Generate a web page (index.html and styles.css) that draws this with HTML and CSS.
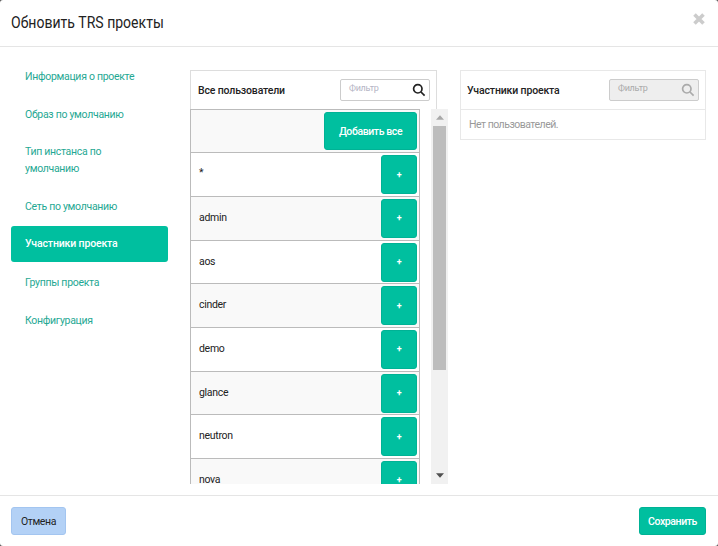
FILE: index.html
```html
<!DOCTYPE html>
<html lang="ru">
<head>
<meta charset="utf-8">
<title>Обновить TRS проекты</title>
<link rel="stylesheet" href="styles.css">
</head>
<body>
<div class="modal">
  <header class="modal-header">
    <h1 class="modal-title">Обновить TRS проекты</h1>
    <svg class="close" viewBox="0 0 14 14" aria-label="Закрыть"><path d="M2.5 2.5l9 9M11.5 2.5l-9 9"/></svg>
  </header>
  <main class="modal-body">
    <nav class="steps">
      <a class="step">Информация о проекте</a>
      <a class="step">Образ по умолчанию</a>
      <a class="step step-wrap">Тип инстанса по умолчанию</a>
      <a class="step">Сеть по умолчанию</a>
      <a class="step active">Участники проекта</a>
      <a class="step">Группы проекта</a>
      <a class="step">Конфигурация</a>
    </nav>
    <section class="all-users">
      <div class="panel-head">
        <span class="panel-title">Все пользователи</span>
        <div class="filter">
          <span class="filter-text">Фильтр</span>
          <svg class="search" viewBox="0 0 14 14"><circle cx="5.8" cy="5.8" r="4.2"/><path d="M9 9l3.6 3.6"/></svg>
        </div>
      </div>
      <div class="list-wrap">
        <div class="list">
          <div class="row row-all"><button class="btn btn-all">Добавить все</button></div>
          <div class="row"><span class="name name-star">*</span><button class="btn btn-add">+</button></div>
          <div class="row"><span class="name">admin</span><button class="btn btn-add">+</button></div>
          <div class="row"><span class="name">aos</span><button class="btn btn-add">+</button></div>
          <div class="row"><span class="name">cinder</span><button class="btn btn-add">+</button></div>
          <div class="row"><span class="name">demo</span><button class="btn btn-add">+</button></div>
          <div class="row"><span class="name">glance</span><button class="btn btn-add">+</button></div>
          <div class="row"><span class="name">neutron</span><button class="btn btn-add">+</button></div>
          <div class="row"><span class="name">nova</span><button class="btn btn-add">+</button></div>
        </div>
        <div class="scrollbar">
          <svg class="arrow" viewBox="0 0 9 5"><path d="M4.5 0L9 5H0z"/></svg>
          <div class="thumb"></div>
          <svg class="arrow arrow-down" viewBox="0 0 9 5"><path d="M0 0h9L4.5 5z"/></svg>
        </div>
      </div>
    </section>
    <section class="members">
      <div class="panel-head panel-head-light">
        <span class="panel-title">Участники проекта</span>
        <div class="filter filter-off">
          <span class="filter-text">Фильтр</span>
          <svg class="search" viewBox="0 0 14 14"><circle cx="5.8" cy="5.8" r="4.2"/><path d="M9 9l3.6 3.6"/></svg>
        </div>
      </div>
      <div class="empty">Нет пользователей.</div>
    </section>
  </main>
  <footer class="modal-footer">
    <button class="btn btn-cancel">Отмена</button>
    <button class="btn btn-save">Сохранить</button>
  </footer>
</div>
</body>
</html>
```
FILE: styles.css
```css
* { box-sizing: border-box; }
html, body { margin: 0; height: 100%; }
body {
  background: #555;
  font-family: Roboto, "Noto Sans", "Liberation Sans", sans-serif;
  font-size: 10.5px;
  letter-spacing: -0.3px;
  color: #222;
  overflow: hidden;
}
.modal {
  height: 546px;
  background: #fff;
  border-radius: 3px;
  display: flex;
  flex-direction: column;
}
.modal-header {
  height: 47px;
  flex: none;
  border-bottom: 1px solid #e5e5e5;
  display: flex;
  align-items: center;
  justify-content: space-between;
  padding: 0 12px 2px 11px;
}
.modal-title {
  margin: 0;
  font-size: 16.5px;
  font-weight: 400;
  letter-spacing: 0;
  color: #222;
  transform: scaleX(0.85);
  transform-origin: left center;
}
.close { width: 14px; height: 14px; fill: none; stroke: #ccc; stroke-width: 3.6; margin-top: -7px; }
.modal-body { flex: 1; min-height: 0; display: flex; padding: 11px 12px 11px 11px; align-items: flex-start; }
.steps { width: 157px; flex: none; display: flex; flex-direction: column; gap: 2px; }
.step {
  display: block;
  padding: 10px 14px 9px;
  line-height: 17px;
  color: #1fa893;
  border-radius: 3px;
}
.step-wrap { padding: 9px 14px; }
.step.active { background: #00bf9f; color: #fff; font-weight: 500; letter-spacing: -0.15px; padding: 9px 14px 10px; }
.all-users { margin: 12px 0 0 22px; width: 258px; flex: none; display: flex; flex-direction: column; height: 414px; }
.panel-head {
  height: 39px;
  width: 247px;
  flex: none;
  border: 1px solid #ddd;
  border-bottom: 0;
  display: flex;
  align-items: center;
  justify-content: space-between;
  padding: 0 6px 0 7px;
}
.panel-title { font-weight: 500; color: #222; letter-spacing: -0.15px; }
.filter {
  width: 90px;
  height: 22px;
  border: 1px solid #ccc;
  border-radius: 2px;
  background: #fff;
  display: flex;
  align-items: center;
  justify-content: space-between;
  padding: 0 3px 0 8px;
}
.filter-text { font-size: 9px; color: #b5b5c5; margin-top: -5px; }
.search { width: 14px; height: 14px; fill: none; stroke: #222; stroke-width: 1.7; }
.filter-off { background: #eee; }
.filter-off .filter-text { color: #aaa; }
.filter-off .search { stroke: #aaa; }
.list-wrap { flex: 1; min-height: 0; display: flex; justify-content: space-between; }
.list { width: 230px; overflow: hidden; border-left: 1px solid #bbb; border-right: 1px solid #bbb; border-top: 1px solid #bbb; }
.row {
  height: 43.67px;
  border-bottom: 1px solid #bbb;
  display: flex;
  align-items: flex-start;
  justify-content: space-between;
  padding: 2px 2px 0 8px;
}
.row:nth-child(odd) { background: #f9f9f9; }
.row-all { height: 43.3px; justify-content: flex-end; }
.name { line-height: 38px; color: #222; }
.name-star { line-height: 36px; }
.btn {
  border: 1px solid #00b295;
  border-radius: 3px;
  background: #00bf9f;
  color: #fff;
  font: inherit;
  font-weight: 500;
  letter-spacing: -0.4px;
  padding: 0;
}
.btn-all { width: 93px; height: 38px; }
.btn-add { width: 36px; height: 39px; font-size: 9px; font-weight: 700; }
.scrollbar {
  width: 17px;
  background: #f1f1f1;
  display: flex;
  flex-direction: column;
  align-items: center;
  padding-top: 6px;
}
.arrow { width: 8px; height: 5px; fill: #a8a8a8; flex: none; }
.arrow-down { fill: #505050; margin-top: auto; margin-bottom: 6px; }
.thumb { width: 13px; height: 244px; background: #bdbdbd; margin-top: 6px; }
.members { margin: 12px 0 0 12px; width: 246px; flex: none; border: 1px solid #e8e8e8; }
.panel-head-light { width: auto; border: 0; border-bottom: 1px solid #e8e8e8; height: 39px; padding: 0 6px; }
.empty { height: 29px; line-height: 29px; padding: 0 8px; color: #999; letter-spacing: -0.5px; }
.modal-footer {
  height: 51px;
  flex: none;
  border-top: 1px solid #e5e5e5;
  display: flex;
  justify-content: space-between;
  align-items: flex-start;
  padding: 11px 12px 0 11px;
}
.btn-cancel { width: 55px; height: 28px; background: #b3d1f6; border-color: #a3c5f0; color: #222; font-weight: 400; }
.btn-save { width: 67px; height: 28px; }
```
